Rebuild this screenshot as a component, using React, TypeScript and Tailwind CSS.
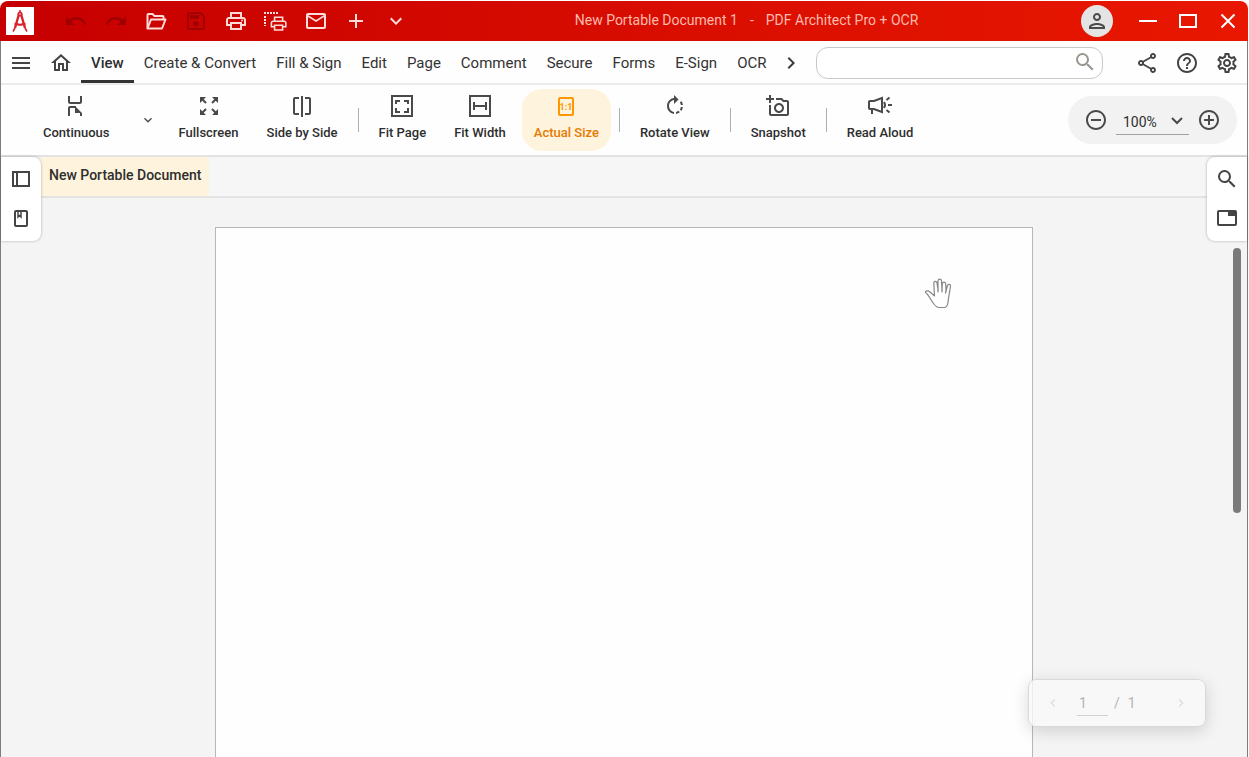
import type { ReactNode } from 'react'
import {
  MdAdd,
  MdAddCircleOutline,
  MdChevronLeft,
  MdChevronRight,
  MdExpandMore,
  MdHelpOutline,
  MdOutlineAddAPhoto,
  MdOutlineHome,
  MdOutlineMail,
  MdOutlinePerson,
  MdOutlinePrint,
  MdOutlineSave,
  MdOutlineSettings,
  MdOutlineShare,
  MdRedo,
  MdRemoveCircleOutline,
  MdRotateRight,
  MdSearch,
  MdUndo,
} from 'react-icons/md'

const menuItems = ['View', 'Create & Convert', 'Fill & Sign', 'Edit', 'Page', 'Comment', 'Secure', 'Forms', 'E-Sign', 'OCR']

function Svg({ children, size = 24 }: { children: ReactNode; size?: number }) {
  return (
    <svg width={size} height={size} viewBox="0 0 24 24" fill="none" stroke="currentColor" strokeWidth="2" aria-hidden="true">
      {children}
    </svg>
  )
}

// Drawing compass
function LogoIcon() {
  return (
    <svg width="28" height="28" viewBox="0 0 28 28" fill="none" aria-hidden="true">
      <path d="M13 7 9 21M15 7l4 14" stroke="#d8232a" strokeWidth="2.400" />
      <path d="M9 21l-2 3.500M19 21l2 3.500" stroke="#d8232a" strokeWidth="1.600" />
      <path d="M8.500 17h2.500q3 1.500 6 0h2.500" stroke="#d8232a" strokeWidth="2" />
      <path d="M14 3v3" stroke="#d8232a" strokeWidth="1.500" />
      <circle cx="14" cy="7" r="2.500" fill="#d8232a" />
      <circle cx="14" cy="7" r=".8" fill="#fff" />
    </svg>
  )
}

function MenuIcon() {
  return (
    <Svg>
      <path d="M3 7h18M3 12h18M3 17h18" />
    </Svg>
  )
}

function FolderOpenIcon() {
  return (
    <Svg>
      <path d="M3.500 19.500V6q0-1 1-1h4l2 2h8q1 0 1 1v2.500" />
      <path d="M3.500 19.500 7 10.500h14.500l-3.500 9z" strokeLinejoin="round" />
    </Svg>
  )
}

function PrintAreaIcon() {
  return (
    <svg width="24" height="24" viewBox="0 0 24 24" fill="none" aria-hidden="true">
      <path d="M0 4h14" stroke="currentColor" strokeWidth="2" strokeDasharray="2 1" />
      <path d="M1 7v10" stroke="currentColor" strokeWidth="2" strokeDasharray="2 1" />
      <g transform="translate(5 5) scale(.8)">
        <path
          fill="currentColor"
          d="M19 8h-1V3H6v5H5c-1.660 0-3 1.340-3 3v6h4v4h12v-4h4v-6c0-1.660-1.340-3-3-3zM8 5h8v3H8V5zm8 12v2H8v-4h8v2zm2-2v-2H6v2H4v-4c0-.55.45-1 1-1h14c.55 0 1 .45 1 1v4h-2z"
        />
      </g>
    </svg>
  )
}

function ContinuousIcon() {
  return (
    <Svg>
      <path d="M5 2v5.500Q5 9 6.500 9h9Q17 9 17 7.500V2" />
      <path d="M5 22v-8q0-1 1-1h6" />
      <path d="M11 12l7 7v3h-2v-3h-5z" fill="currentColor" stroke="none" />
    </Svg>
  )
}

function FullscreenIcon() {
  return (
    <Svg>
      <path d="M3 3h6L3 9zM21 3v6l-6-6zM3 21v-6l6 6zM21 21h-6l6-6z" fill="currentColor" stroke="none" />
      <path d="M5 5l4 4M19 5l-4 4M5 19l4-4M19 19l-4-4" />
    </Svg>
  )
}

function SideBySideIcon() {
  return (
    <Svg>
      <path d="M9 4H5Q4 4 4 5v14q0 1 1 1h4M15 4h4q1 0 1 1v14q0 1-1 1h-4" />
      <path d="M12 2v21" />
    </Svg>
  )
}

function FitPageIcon() {
  return (
    <Svg>
      <path d="M2 2h20v20H2z" />
      <path d="M6 10V7h4M14 7h4v3M18 14v4h-4M10 18H6v-4" />
    </Svg>
  )
}

function FitWidthIcon() {
  return (
    <Svg>
      <path d="M2 2h20v20H2z" />
      <path d="M6 8v8M18 8v8M6 12h12" />
    </Svg>
  )
}

function ActualSizeIcon() {
  return (
    <Svg>
      <rect x="5" y="4" width="14" height="17" rx="1" />
      <text x="12" y="16" textAnchor="middle" fontSize="9" fontWeight="700" fill="currentColor" stroke="none">
        1:1
      </text>
    </Svg>
  )
}

function ReadAloudIcon() {
  return (
    <svg width="26" height="24" viewBox="0 0 26 24" fill="none" stroke="currentColor" strokeWidth="2" aria-hidden="true">
      <path d="M2 7.500Q2 7 3 7h4l8-3v14l-8-3H3q-1 0-1-1zM5 15v5" />
      <path d="M17 8q2 3 0 6M21 11h4M19.500 6l3-2.500M19.500 16l3 2.500" />
    </svg>
  )
}

function SidebarIcon() {
  return (
    <Svg>
      <path d="M4 5h16v14H4zM8 5v14" />
    </Svg>
  )
}

function BookmarkIcon() {
  return (
    <Svg>
      <rect x="6" y="4" width="12" height="15" rx="1" />
      <path d="M9 4v6l1.500-1.500L12 10V4" strokeWidth="1.500" />
    </Svg>
  )
}

function TabIcon() {
  return (
    <Svg>
      <rect x="3" y="4" width="18" height="14" rx="1" />
      <path d="M13 4h8v5h-8z" fill="currentColor" stroke="none" />
    </Svg>
  )
}

function HandIcon() {
  return (
    <svg width="28" height="32" viewBox="0 0 28 32" fill="#fff" stroke="#888" strokeWidth="1.200" strokeLinejoin="round" strokeLinecap="round" aria-hidden="true">
      <path d="M10.500 19 6 15c-2-1.500-5-1.500-4.500.5 3 2 5 7 8 11 1.500 2 3 4 5.500 4h5c2 0 3.500-2 4-5 .5-5 1.500-10 2.500-16 .3-2.500-2.500-3-3.200-.5L22 14l-.3-7c-.1-2.500-3.200-2.500-3.400 0L18 13 17.500 4c-.2-2.500-3.300-2.500-3.500 0L14 13l-1-7c-.4-2.500-3.300-2-3.200.5z" />
      <path d="M14 13v2M18 13v2M22 14l-.5 2" />
    </svg>
  )
}

function TitleButton({ label, disabled, children }: { label: string; disabled?: boolean; children: ReactNode }) {
  return (
    <button aria-label={label} disabled={disabled} className="flex h-10 w-10 items-center justify-center text-[#ffdcd8] disabled:text-[#a00000]">
      {children}
    </button>
  )
}

function IconButton({ label, children }: { label: string; children: ReactNode }) {
  return (
    <button aria-label={label} className="flex h-10 w-10 shrink-0 items-center justify-center text-[#444]">
      {children}
    </button>
  )
}

function Tool({ label, active, children }: { label: string; active?: boolean; children: ReactNode }) {
  return (
    <button
      className={
        active
          ? 'flex h-[62px] flex-col items-center gap-[5px] rounded-[20px] bg-[#fef3dc] px-3 pt-[5px] text-[#ff9800]'
          : 'flex h-[62px] flex-col items-center gap-[5px] px-3 pt-[5px] text-[#4a4a4a]'
      }
    >
      {children}
      <span className={active ? 'text-[13px] leading-5 font-medium text-[#e67a00]' : 'text-[13px] leading-5 font-medium text-[#2e2e2e]'}>
        {label}
      </span>
    </button>
  )
}

function Separator() {
  return <div className="mx-1 h-6 w-px bg-[#b0b0b0]" />
}

export default function App() {
  return (
    <div className="flex h-screen flex-col overflow-hidden bg-white pt-px pr-px font-[Roboto,sans-serif] whitespace-nowrap">
      {/* Title bar */}
      <header className="flex h-10 shrink-0 items-center rounded-t-lg bg-linear-to-r from-[#c60000] to-[#e91700] pl-1.5">
        <div className="mr-[22px] bg-white">
          <LogoIcon />
        </div>
        <TitleButton label="Undo" disabled><MdUndo size={24} /></TitleButton>
        <TitleButton label="Redo" disabled><MdRedo size={24} /></TitleButton>
        <TitleButton label="Open"><FolderOpenIcon /></TitleButton>
        <TitleButton label="Save" disabled><MdOutlineSave size={24} /></TitleButton>
        <TitleButton label="Print"><MdOutlinePrint size={24} /></TitleButton>
        <TitleButton label="Print area"><PrintAreaIcon /></TitleButton>
        <TitleButton label="E-mail"><MdOutlineMail size={24} /></TitleButton>
        <TitleButton label="New"><MdAdd size={24} /></TitleButton>
        <TitleButton label="More"><MdExpandMore size={24} /></TitleButton>
        <h1 className="flex flex-1 justify-center gap-3 pb-0.5 text-sm text-[#ffb9ae]">
          <span>New Portable Document 1</span>
          <span>-</span>
          <span>PDF Architect Pro + OCR</span>
        </h1>
        <button aria-label="Account" className="mr-[15px] ml-1 flex h-8 w-8 items-center justify-center rounded-full bg-[#e4e4e4] text-[#4a4a4a]">
          <MdOutlinePerson size={24} />
        </button>
        <button aria-label="Minimize" className="flex h-10 w-10 items-center justify-center text-white">
          <Svg><path d="M3 12h18" /></Svg>
        </button>
        <button aria-label="Maximize" className="flex h-10 w-10 items-center justify-center text-white">
          <Svg><path d="M4 6h16v12H4z" /></Svg>
        </button>
        <button aria-label="Close" className="flex h-10 w-10 items-center justify-center text-white">
          <Svg><path d="M5.500 5.500l13 13M18.500 5.500l-13 13" /></Svg>
        </button>
      </header>

      <div className="flex min-h-0 flex-1 flex-col border-x border-[#7d7d7d] bg-[#fefefe]">
        {/* Menu */}
        <nav className="flex h-11 shrink-0 items-center border-b-2 border-[#ebebeb] pt-0.5">
          <IconButton label="Menu"><MenuIcon /></IconButton>
          <IconButton label="Home"><MdOutlineHome size={24} /></IconButton>
          {menuItems.map((item) => (
            <a
              key={item}
              href="#"
              className={
                item === 'View'
                  ? 'flex h-10 items-center border-b-3 border-[#333] px-2.5 pt-[3px] text-[15px] font-medium text-[#2e2e2e]'
                  : 'flex h-10 items-center px-2.5 text-[15px] text-[#333]'
              }
            >
              {item}
            </a>
          ))}
          <button aria-label="More tabs" className="ml-[3px] flex h-10 w-6 items-center justify-center text-[#3c3c3c]">
            <MdChevronRight size={24} />
          </button>
          <div className="relative mr-6 ml-[13px] flex-1">
            <input type="text" aria-label="Search" className="block h-8 w-full rounded-xl border border-[#c8c8c8] bg-white pr-10 pl-3 text-sm outline-none" />
            <MdSearch size={24} className="absolute top-[3px] right-1.5 text-[#999690]" />
          </div>
          <IconButton label="Share"><MdOutlineShare size={24} /></IconButton>
          <IconButton label="Help"><MdHelpOutline size={24} /></IconButton>
          <IconButton label="Settings"><MdOutlineSettings size={24} /></IconButton>
        </nav>

        {/* Toolbar */}
        <div className="flex h-[72px] shrink-0 items-center gap-1 border-b-2 border-[#e3e3e3] pr-2.5 pl-[30px]">
          <Tool label="Continuous"><ContinuousIcon /></Tool>
          <button aria-label="Continuous options" className="mr-[7px] ml-3.5 flex h-6 w-4 items-center justify-center text-[#4a4a4a]">
            <MdExpandMore size={16} />
          </button>
          <Tool label="Fullscreen"><FullscreenIcon /></Tool>
          <Tool label="Side by Side"><SideBySideIcon /></Tool>
          <Separator />
          <Tool label="Fit Page"><FitPageIcon /></Tool>
          <Tool label="Fit Width"><FitWidthIcon /></Tool>
          <Tool label="Actual Size" active><ActualSizeIcon /></Tool>
          <Separator />
          <Tool label="Rotate View"><MdRotateRight size={24} /></Tool>
          <Separator />
          <Tool label="Snapshot"><MdOutlineAddAPhoto size={24} /></Tool>
          <Separator />
          <Tool label="Read Aloud"><ReadAloudIcon /></Tool>

          <div className="ml-auto flex h-12 items-center gap-2 rounded-3xl bg-[#f2f2f2] px-4 text-[#4a4a4a]">
            <button aria-label="Zoom out"><MdRemoveCircleOutline size={24} /></button>
            <div className="relative">
              <select aria-label="Zoom" className="block h-[30px] w-[73px] appearance-none border-b border-[#a0a0a0] pt-1 pl-[7px] text-sm text-[#2e2e2e] outline-none">
                <option>100%</option>
              </select>
              <svg width="12" height="8" viewBox="0 0 12 8" fill="none" stroke="currentColor" strokeWidth="2" className="pointer-events-none absolute top-3 right-1.5" aria-hidden="true">
                <path d="M1 1l5 5 5-5" />
              </svg>
            </div>
            <button aria-label="Zoom in"><MdAddCircleOutline size={24} /></button>
          </div>
        </div>

        <div className="relative flex min-h-0 flex-1 flex-col bg-[#f4f4f4]">
          {/* Document tabs */}
          <div className="flex h-[41px] shrink-0 border-b-2 border-[#e3e3e3] bg-[#f6f6f6] pl-10">
            <button className="bg-[#fef3dc] px-2 pb-1 text-sm font-medium text-[#2e2e2e]">New Portable Document</button>
          </div>

          {/* Page */}
          <main className="flex min-h-0 flex-1 justify-center overflow-hidden px-12 pt-[29px]">
            <div className="relative w-full max-w-[818px] border border-b-0 border-[#b8b8b8] bg-[#fefefe]">
              <div className="absolute top-[49px] right-20">
                <HandIcon />
              </div>
            </div>
          </main>

          {/* Side panels */}
          <aside className="absolute top-0 left-0 rounded-r-lg bg-white py-0.5 shadow-[0_0_3px_rgba(0,0,0,0.3)]">
            <IconButton label="Thumbnails"><SidebarIcon /></IconButton>
            <IconButton label="Bookmarks"><BookmarkIcon /></IconButton>
          </aside>
          <aside className="absolute top-0 right-0 rounded-l-lg bg-white py-0.5 shadow-[0_0_3px_rgba(0,0,0,0.3)]">
            <IconButton label="Find"><MdSearch size={24} /></IconButton>
            <IconButton label="Properties"><TabIcon /></IconButton>
          </aside>

          <div className="absolute top-[91px] right-1.5 h-[265px] w-2 rounded-full bg-[#7a7a7a]" />

          {/* Page navigation */}
          <div className="absolute right-[41px] bottom-[30px] flex h-12 w-[178px] items-center rounded-lg border border-[#d9d9d9] bg-[#f9f9f9]/80 px-4 text-sm text-[#b4b4b4] shadow-[0_4px_16px_rgba(0,0,0,0.15)]">
            <button aria-label="Previous page" className="text-[#dedede]"><MdChevronLeft size={16} /></button>
            <input type="text" aria-label="Page number" defaultValue="1" className="ml-4 h-[26px] w-[31px] border-b border-[#d0d0d0] pl-0.5 outline-none" />
            <span className="ml-1.5">/</span>
            <span className="ml-2">1</span>
            <button aria-label="Next page" className="ml-auto text-[#dedede]"><MdChevronRight size={16} /></button>
          </div>
        </div>
      </div>
    </div>
  )
}
